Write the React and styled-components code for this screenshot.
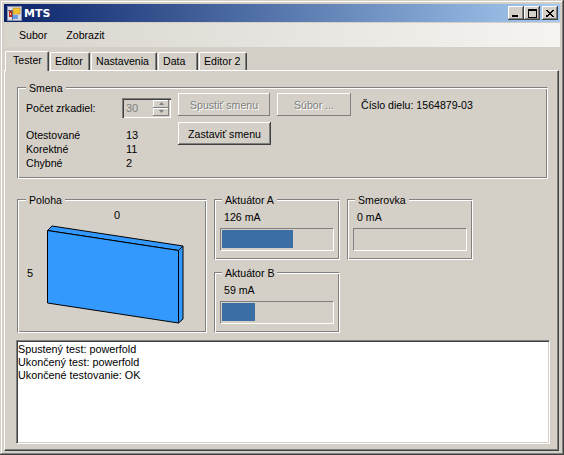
import React from "react"
import styled, { createGlobalStyle } from "styled-components"

const tabs = [
  { label: "Tester", width: 44, active: true },
  { label: "Editor", width: 40 },
  { label: "Nastavenia", width: 66 },
  { label: "Data", width: 40 },
  { label: "Editor 2", width: 48 },
]

const stats = [
  { label: "Otestované", value: 13 },
  { label: "Korektné", value: 11 },
  { label: "Chybné", value: 2 },
]

const logLines = ["Spustený test: powerfold", "Ukončený test: powerfold", "Ukončené testovanie: OK"]

const METER_MAX = 195

const GlobalStyle = createGlobalStyle`
  html, body {
    margin: 0;
    padding: 0;
    background: #d4d0c8;
  }
  body {
    font-family: "Liberation Sans", Arial, sans-serif;
    font-size: 10.6px;
    color: #000;
  }
`

const Window = styled.div`
  box-sizing: border-box;
  width: 564px;
  height: 455px;
  padding: 4px;
  display: flex;
  flex-direction: column;
  background: #d4d0c8;
  box-shadow: inset -1px -1px 0 #404040, inset 1px 1px 0 #d4d0c8, inset -2px -2px 0 #808080, inset 2px 2px 0 #fff;
  overflow: hidden;
`

const TitleBar = styled.div`
  height: 18px;
  flex: none;
  margin-bottom: 1px;
  padding: 0 2px 0 3px;
  display: flex;
  align-items: center;
  background: linear-gradient(90deg, #0a246a, #a6caf0);
`

const TitleText = styled.span`
  margin-left: 1px;
  color: #fff;
  font-family: "DejaVu Sans", sans-serif;
  font-size: 11px;
  font-weight: 700;
`

const CaptionButtons = styled.div`
  margin-left: auto;
  display: flex;
`

const CaptionButton = styled.div`
  box-sizing: border-box;
  width: 16px;
  height: 14px;
  margin-left: ${(p) => (p.$gap ? "2px" : "0")};
  display: flex;
  align-items: center;
  justify-content: center;
  background: #d4d0c8;
  box-shadow: inset -1px -1px 0 #404040, inset 1px 1px 0 #fff, inset -2px -2px 0 #808080;
`

const MenuBar = styled.div`
  height: 24px;
  flex: none;
  padding-left: 15px;
  display: flex;
  align-items: center;
  gap: 19px;
  background: linear-gradient(90deg, #d8d5cd, #f5f4f1);
`

const TabStrip = styled.div`
  height: 23px;
  flex: none;
  padding-left: 1px;
  display: flex;
  align-items: flex-end;
  gap: 1px;
`

const Tab = styled.div`
  box-sizing: border-box;
  position: relative;
  z-index: ${(p) => (p.$active ? 1 : 0)};
  width: ${(p) => p.$width}px;
  height: ${(p) => (p.$active ? 20 : 18)}px;
  margin-bottom: ${(p) => (p.$active ? "-1px" : "0")};
  padding-left: ${(p) => (p.$active ? 7 : 4)}px;
  line-height: 17px;
  background: #d4d0c8;
  border-top: 1px solid #fff;
  border-left: 1px solid #fff;
  border-right: 1px solid #404040;
  border-top-left-radius: 2px;
  border-top-right-radius: 2px;
  box-shadow: inset -1px 0 0 #808080;
`

const Pane = styled.div`
  box-sizing: border-box;
  flex: 1;
  min-height: 0;
  margin-right: 1px;
  padding: 16px 8px 5px 11px;
  display: flex;
  flex-direction: column;
  border-top: 1px solid #fff;
  border-left: 1px solid #fff;
  border-right: 1px solid #404040;
  border-bottom: 1px solid #404040;
  box-shadow: inset -1px -1px 0 #808080;
`

const Group = styled.section`
  box-sizing: border-box;
  position: relative;
  width: ${(p) => p.$width}px;
  height: ${(p) => p.$height}px;
  margin-left: ${(p) => p.$inset || 0}px;
  border: 1px solid;
  border-color: #808080 #fff #fff #808080;
  box-shadow: inset 1px 1px 0 #fff, inset -1px -1px 0 #808080;
`

const Legend = styled.span`
  position: absolute;
  top: -7px;
  left: ${(p) => p.$left || 8}px;
  padding: 0 3px;
  line-height: 14px;
  background: #d4d0c8;
`

const SmenaBody = styled.div`
  padding: 5px 0 0 8px;
  display: flex;
`

const SmenaLeft = styled.div`
  width: 152px;
`

const CountRow = styled.div`
  height: 23px;
  margin-top: 3px;
  display: flex;
  align-items: center;
  justify-content: space-between;
  padding-right: 7px;
`

const Spinner = styled.div`
  box-sizing: border-box;
  width: 49px;
  height: 20px;
  padding: 2px;
  display: flex;
  justify-content: space-between;
  color: #808080;
  font-size: 11px;
  line-height: 16px;
  box-shadow: inset 1px 1px 0 #808080, inset 2px 2px 0 #404040, inset -1px -1px 0 #fff, inset -2px -2px 0 #d4d0c8;
`

const SpinValue = styled.span`
  padding-left: 2px;
`

const SpinArrows = styled.div`
  width: 16px;
  display: flex;
  flex-direction: column;
`

const SpinArrow = styled.div`
  flex: 1;
  display: flex;
  align-items: center;
  justify-content: center;
  box-shadow: inset -1px -1px 0 #808080, inset 1px 1px 0 #fff;
`

const StatList = styled.dl`
  margin: 9px 0 0;
  display: grid;
  grid-template-columns: 100px 1fr;
  grid-auto-rows: 14px;
  line-height: 14px;
`

const StatLabel = styled.dt`
  margin: 0;
`

const StatValue = styled.dd`
  margin: 0;
  font-size: 11px;
`

const ButtonColumn = styled.div`
  display: flex;
  flex-direction: column;
  gap: 6px;
`

const ButtonRow = styled.div`
  display: flex;
  align-items: center;
`

const Button = styled.div`
  box-sizing: border-box;
  width: ${(p) => p.$width}px;
  height: 23px;
  margin-right: 7px;
  display: flex;
  align-items: center;
  justify-content: center;
  background: #d4d0c8;
  color: ${(p) => (p.$disabled ? "#808080" : "#000")};
  text-shadow: ${(p) => (p.$disabled ? "1px 1px 0 #fff" : "none")};
  box-shadow: ${(p) =>
    p.$disabled
      ? "inset -1px -1px 0 #808080, inset 1px 1px 0 #fff"
      : "inset -1px -1px 0 #404040, inset 1px 1px 0 #fff, inset -2px -2px 0 #808080"};
`

const PartNumber = styled.span`
  margin-left: 3px;
`

const MiddleRow = styled.div`
  margin: 20px 0 0 1px;
  display: flex;
  gap: 7px;
`

const PlateTop = styled.div`
  padding: 8px 0 0 10px;
  height: 20px;
  text-align: center;
  line-height: 14px;
  font-size: 11px;
`

const PlateBody = styled.div`
  display: flex;
  align-items: center;
  margin-top: -3px;
  padding-left: 9px;
`

const PlateLabel = styled.span`
  margin-bottom: 4px;
  font-size: 11px;
`

const PlateSvg = styled.svg`
  display: block;
  margin-left: 14px;
`

const MeterGrid = styled.div`
  display: grid;
  grid-template-columns: 126px 126px;
  grid-auto-rows: 61px;
  gap: 12px 7px;
`

const MeterValue = styled.div`
  padding: 10px 0 0 9px;
  line-height: 14px;
`

const MeterBar = styled.div`
  box-sizing: border-box;
  width: 114px;
  height: 23px;
  margin: 4px 0 0 5px;
  padding: 1px 1px 2px 1px;
  border: 1px solid;
  border-color: #808080 #fff #fff #808080;
`

const MeterFill = styled.div`
  height: 100%;
  background: #3a6ea5;
`

const LogBox = styled.div`
  box-sizing: border-box;
  height: 104px;
  margin-top: 7px;
  padding: 2px 2px 2px 1px;
  background: #fff;
  font-size: 10.8px;
  line-height: 13px;
  border: 1px solid;
  border-color: #808080 #fff #fff #808080;
  box-shadow: inset 1px 1px 0 #404040, inset -1px -1px 0 #d4d0c8;
`

const AppIcon = () => (
  <svg width="16" height="16" viewBox="0 0 16 16">
    <rect x="0.5" y="1.5" width="14" height="14" fill="#dcdce8" stroke="#8c90a8" />
    <path d="M1 5.5H5M5.5 5V15" stroke="#5a6490" fill="none" />
    <rect x="6" y="3" width="7" height="6" fill="#f4c430" stroke="#b08a28" strokeWidth="0.6" />
    <rect x="2" y="6" width="3" height="6" fill="#b82818" />
    <rect x="3" y="8" width="1" height="2" fill="#f4d0c8" />
    <rect x="6" y="10" width="5" height="4" fill="#6c9ce0" />
  </svg>
)

const MinimizeGlyph = () => (
  <svg width="8" height="7" viewBox="0 0 8 7">
    <rect x="0" y="5" width="6" height="2" fill="#000" />
  </svg>
)

const MaximizeGlyph = () => (
  <svg width="9" height="9" viewBox="0 0 9 9">
    <path d="M0 0H9V9H0Z M1 2V8H8V2Z" fill="#000" fillRule="evenodd" />
  </svg>
)

const CloseGlyph = () => (
  <svg width="8" height="7" viewBox="0 0 8 7" shapeRendering="crispEdges">
    <path d="M0 0L7.5 7M7.5 0L0 7" stroke="#000" strokeWidth="1.5" fill="none" />
  </svg>
)

const Arrow = ({ down }) => (
  <svg width="5" height="3" viewBox="0 0 5 3">
    <path d={down ? "M0 0H5L2.5 3Z" : "M0 3H5L2.5 0Z"} fill="#808080" />
  </svg>
)

const Plate = () => (
  <PlateSvg width="138" height="100" viewBox="0 0 138 100">
    <g fill="#3399ff" stroke="#000" strokeWidth="1" strokeLinejoin="round">
      <path d="M0.5 5.5L5 1L136 21L131.5 25.5Z" />
      <path d="M131.5 25.5L136 21V94L131.5 98Z" />
      <path d="M0.5 5.5L131.5 25.5V98L0.5 78Z" />
    </g>
  </PlateSvg>
)

const Meter = ({ title, value }) => (
  <Group $width={126} $height={61}>
    <Legend $left={7}>{title}</Legend>
    <MeterValue>{value} mA</MeterValue>
    <MeterBar>
      <MeterFill style={{ width: `${(value / METER_MAX) * 100}%` }} />
    </MeterBar>
  </Group>
)

export default function App() {
  return (
    <>
      <GlobalStyle />
      <Window>
        <TitleBar>
          <AppIcon />
          <TitleText>MTS</TitleText>
          <CaptionButtons>
            <CaptionButton><MinimizeGlyph /></CaptionButton>
            <CaptionButton><MaximizeGlyph /></CaptionButton>
            <CaptionButton $gap><CloseGlyph /></CaptionButton>
          </CaptionButtons>
        </TitleBar>
        <MenuBar>
          <span>Subor</span>
          <span>Zobrazit</span>
        </MenuBar>
        <TabStrip>
          {tabs.map((tab) => (
            <Tab key={tab.label} $active={tab.active} $width={tab.width}>{tab.label}</Tab>
          ))}
        </TabStrip>
        <Pane>
          <Group $width={531} $height={92} $inset={1}>
            <Legend>Smena</Legend>
            <SmenaBody>
              <SmenaLeft>
                <CountRow>
                  <span>Počet zrkadiel:</span>
                  <Spinner>
                    <SpinValue>30</SpinValue>
                    <SpinArrows>
                      <SpinArrow><Arrow /></SpinArrow>
                      <SpinArrow><Arrow down /></SpinArrow>
                    </SpinArrows>
                  </Spinner>
                </CountRow>
                <StatList>
                  {stats.map((s) => (
                    <React.Fragment key={s.label}>
                      <StatLabel>{s.label}</StatLabel>
                      <StatValue>{s.value}</StatValue>
                    </React.Fragment>
                  ))}
                </StatList>
              </SmenaLeft>
              <ButtonColumn>
                <ButtonRow>
                  <Button $width={92} $disabled>Spustiť smenu</Button>
                  <Button $width={74} $disabled>Súbor ...</Button>
                  <PartNumber>Číslo dielu: 1564879-03</PartNumber>
                </ButtonRow>
                <Button $width={93}>Zastaviť smenu</Button>
              </ButtonColumn>
            </SmenaBody>
          </Group>
          <MiddleRow>
            <Group $width={190} $height={134}>
              <Legend>Poloha</Legend>
              <PlateTop>0</PlateTop>
              <PlateBody>
                <PlateLabel>5</PlateLabel>
                <Plate />
              </PlateBody>
            </Group>
            <MeterGrid>
              <Meter title="Aktuátor A" value={126} />
              <Meter title="Smerovka" value={0} />
              <Meter title="Aktuátor B" value={59} />
            </MeterGrid>
          </MiddleRow>
          <LogBox>
            {logLines.map((line) => (
              <div key={line}>{line}</div>
            ))}
          </LogBox>
        </Pane>
      </Window>
    </>
  )
}
